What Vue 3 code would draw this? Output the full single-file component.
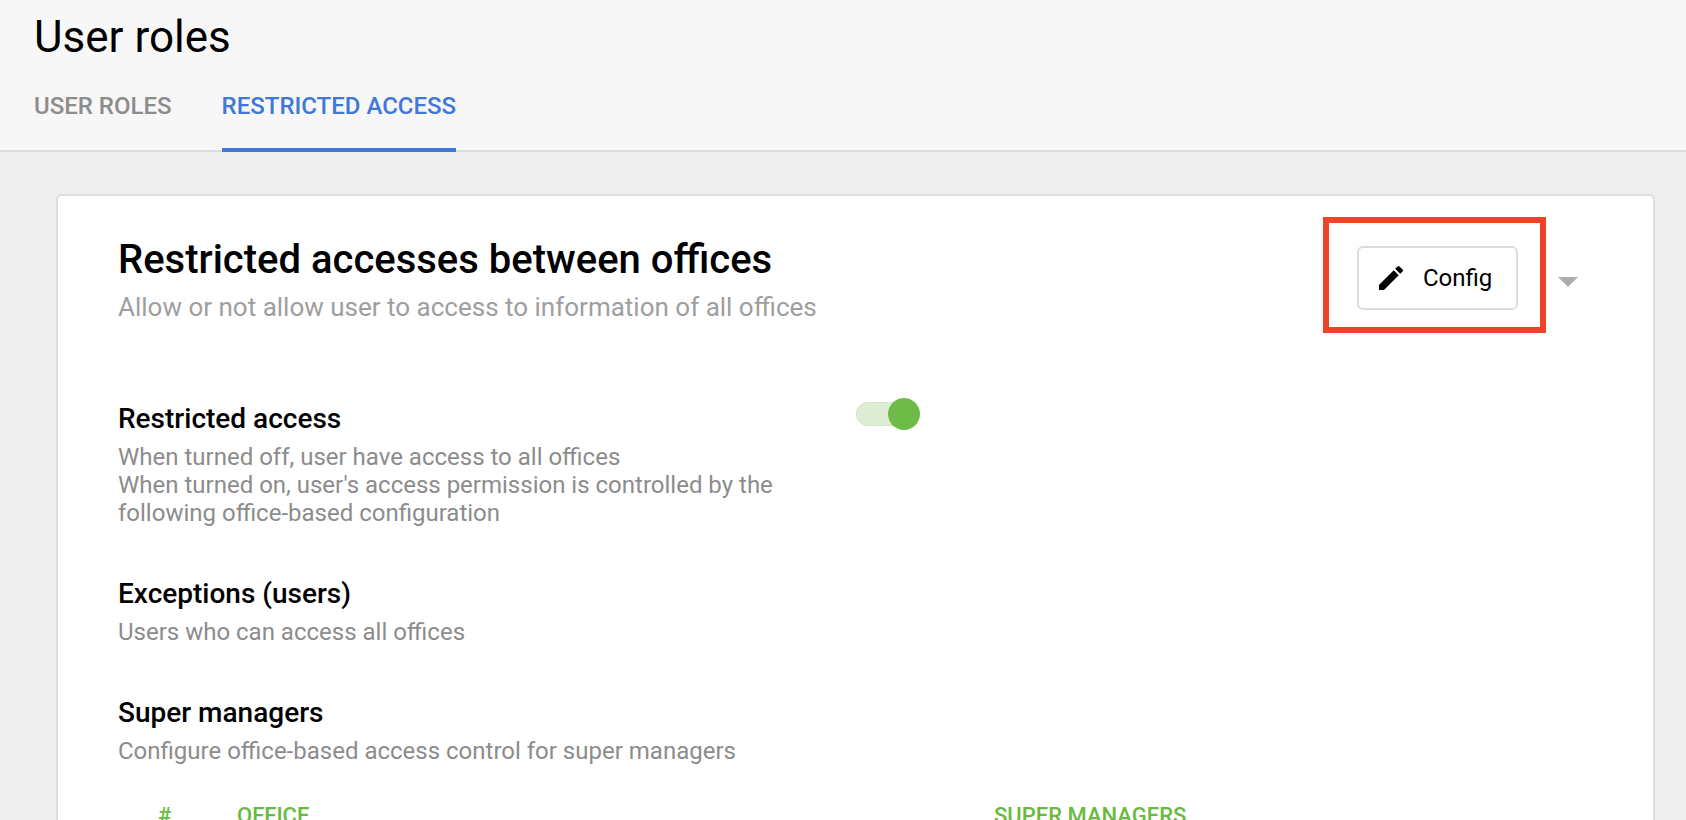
<script setup>
const tabs = [
  { id: 'roles', label: 'USER ROLES', active: false },
  { id: 'restricted', label: 'RESTRICTED ACCESS', active: true },
]

const sections = [
  {
    id: 'restricted-access',
    title: 'Restricted access',
    lines: [
      'When turned off, user have access to all offices',
      "When turned on, user's access permission is controlled by the following office-based configuration",
    ],
    toggle: true,
  },
  {
    id: 'exceptions',
    title: 'Exceptions (users)',
    lines: ['Users who can access all offices'],
  },
  {
    id: 'super-managers',
    title: 'Super managers',
    lines: ['Configure office-based access control for super managers'],
  },
]
</script>

<template>
  <div class="page">
    <header class="top">
      <h1 class="page-title">User roles</h1>
      <nav class="tabs">
        <a
          v-for="tab in tabs"
          :key="tab.id"
          class="tab"
          :class="{ active: tab.active }"
        >{{ tab.label }}</a>
      </nav>
    </header>

    <main class="content">
      <section class="card">
        <div class="card-head">
          <div>
            <h2 class="card-title">Restricted accesses between offices</h2>
            <p class="card-sub">Allow or not allow user to access to information of all offices</p>
          </div>
          <div class="actions">
            <button class="config-btn">
              <svg class="pencil" viewBox="0 0 24 24" width="32" height="32">
                <path d="M3 17.25V21h3.75L17.81 9.94l-3.75-3.75L3 17.25zM20.71 7.04a1 1 0 0 0 0-1.41l-2.34-2.34a1 1 0 0 0-1.41 0l-1.83 1.83 3.75 3.75 1.83-1.83z" />
              </svg>
              <span>Config</span>
              <!-- red annotation box over the button -->
              <span class="highlight"></span>
            </button>
            <span class="caret"></span>
          </div>
        </div>

        <div
          v-for="section in sections"
          :key="section.id"
          class="setting"
        >
          <div class="setting-text">
            <h3 class="setting-title">{{ section.title }}</h3>
            <p v-for="line in section.lines" :key="line" class="setting-desc">{{ line }}</p>
          </div>
          <div v-if="section.toggle" class="switch">
            <span class="switch-track"></span>
            <span class="switch-knob"></span>
          </div>
        </div>

        <div class="table-head">
          <span class="col-num">#</span>
          <span class="col-office">OFFICE</span>
          <span>SUPER MANAGERS</span>
        </div>
      </section>
    </main>
  </div>
</template>

<style>
html,
body {
  margin: 0;
  height: 820px;
  overflow: hidden;
  background: #eeeeee;
}
</style>

<style scoped>
.page {
  height: 820px;
  overflow: hidden;
  font-family: Roboto, "Liberation Sans", sans-serif;
  color: #000;
}

.top {
  height: 150px;
  padding-left: 34px;
  background: #f7f7f7;
  border-bottom: 2px solid #dedede;
  display: flex;
  flex-direction: column;
}

.page-title {
  margin: 0;
  height: 74px;
  line-height: 74px;
  font-size: 44px;
  font-weight: 400;
}

.tabs {
  display: flex;
  gap: 50px;
  height: 78px;
}

.tab {
  box-sizing: border-box;
  height: 78px;
  padding-top: 17px;
  line-height: 30px;
  font-size: 24px;
  font-weight: 500;
  color: #8c8c8c;
}

.tab.active {
  color: #3f78d8;
  border-bottom: 4px solid #3f78d8;
}

.content {
  padding: 42px 31px 0 56px;
}

.card {
  box-sizing: border-box;
  height: 700px;
  padding: 0 0 0 60px;
  background: #fff;
  border: 2px solid #dedede;
  border-radius: 6px;
}

.card-head {
  display: flex;
  justify-content: space-between;
  align-items: flex-start;
  padding: 41px 75px 20px 0;
}

.card-title {
  margin: 0;
  height: 46px;
  line-height: 46px;
  font-size: 40px;
  font-weight: 500;
}

.card-sub {
  margin: 0;
  height: 49px;
  line-height: 48px;
  font-size: 26px;
  color: #9e9e9e;
}

.actions {
  display: flex;
  align-items: center;
  gap: 40px;
  padding-top: 9px;
}

.config-btn {
  position: relative;
  box-sizing: border-box;
  display: flex;
  align-items: center;
  gap: 16px;
  width: 161px;
  height: 64px;
  padding: 0 0 0 16px;
  background: #fff;
  border: 2px solid #dcdcdc;
  border-radius: 6px;
  font-family: inherit;
  font-size: 24px;
  color: #000;
}

.pencil {
  flex: none;
  fill: #000;
}

.highlight {
  position: absolute;
  top: -31px;
  left: -36px;
  right: -30px;
  bottom: -25px;
  border: 6px solid #ee4328;
}

.caret {
  margin-top: 8px;
  border-left: 10px solid transparent;
  border-right: 10px solid transparent;
  border-top: 10px solid #aeaeae;
}

.setting {
  display: flex;
  align-items: flex-start;
  margin-top: 47px;
}

.setting-text {
  width: 680px;
}

.setting-title {
  margin: 0 0 4px;
  height: 40px;
  line-height: 40px;
  font-size: 28px;
  font-weight: 500;
}

.setting-desc {
  margin: 0;
  line-height: 28px;
  font-size: 24px;
  color: #8c8c8c;
}

.switch {
  position: relative;
  margin-top: -1px;
  margin-left: 58px;
  width: 64px;
  height: 32px;
}

.switch-track {
  position: absolute;
  left: 0;
  right: 10px;
  top: 4px;
  bottom: 4px;
  border-radius: 12px;
  background: #deedd3;
  border: 1px solid #d2e4c4;
}

.switch-knob {
  position: absolute;
  right: 0;
  top: 0;
  width: 32px;
  height: 32px;
  border-radius: 50%;
  background: #6fbb47;
}

.table-head {
  display: flex;
  margin-top: 37px;
  line-height: 28px;
  font-size: 22px;
  font-weight: 500;
  color: #6ab93f;
}

.col-num {
  width: 79px;
  padding-left: 40px;
}

.col-office {
  width: 757px;
}
</style>
